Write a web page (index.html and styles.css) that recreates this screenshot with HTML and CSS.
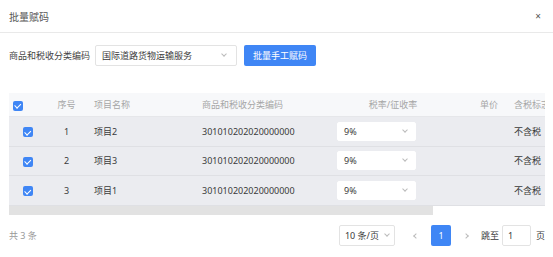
FILE: index.html
```html
<!DOCTYPE html>
<html lang="zh-CN">
<head>
    <meta charset="utf-8">
    <link rel="stylesheet" href="styles.css">
    <title>批量赋码</title>
</head>
<body>
    <div class="dialog">
        <!--TITLE BAR-->
        <div class="dialog-header">
            <span class="dialog-title">批量赋码</span>
            <span class="close">&times;</span>
        </div>

        <!--CODE PICKER-->
        <div class="toolbar">
            <span class="label">商品和税收分类编码</span>
            <div class="select code-select">
                <span>国际道路货物运输服务</span>
                <span class="arrow"></span>
            </div>
            <button class="primary-button">批量手工赋码</button>
        </div>

        <!--TABLE-->
        <div class="table-wrap">
            <table class="table">
                <colgroup>
                    <col style="width:38px">
                    <col style="width:39px">
                    <col style="width:108px">
                    <col style="width:135px">
                    <col style="width:128px">
                    <col style="width:49px">
                    <col style="width:181px">
                </colgroup>
                <thead>
                    <tr>
                        <th class="check-head"><span class="checkbox"></span></th>
                        <th class="center">序号</th>
                        <th>项目名称</th>
                        <th>商品和税收分类编码</th>
                        <th class="center">税率/征收率</th>
                        <th class="right">单价</th>
                        <th>含税标志</th>
                    </tr>
                </thead>
                <tbody>
                    <tr>
                        <td class="center"><span class="checkbox"></span></td>
                        <td class="center">1</td>
                        <td>项目2</td>
                        <td>301010202020000000</td>
                        <td><div class="select rate-select"><span>9%</span><span class="arrow"></span></div></td>
                        <td></td>
                        <td>不含税</td>
                    </tr>
                    <tr>
                        <td class="center"><span class="checkbox"></span></td>
                        <td class="center">2</td>
                        <td>项目3</td>
                        <td>301010202020000000</td>
                        <td><div class="select rate-select"><span>9%</span><span class="arrow"></span></div></td>
                        <td></td>
                        <td>不含税</td>
                    </tr>
                    <tr>
                        <td class="center"><span class="checkbox"></span></td>
                        <td class="center">3</td>
                        <td>项目1</td>
                        <td>301010202020000000</td>
                        <td><div class="select rate-select"><span>9%</span><span class="arrow"></span></div></td>
                        <td></td>
                        <td>不含税</td>
                    </tr>
                </tbody>
            </table>
        </div>
        <!--horizontal scroll bar of the table-->
        <div class="scrollbar"><div class="scroll-thumb"></div></div>

        <!--PAGER-->
        <div class="footer">
            <span class="total">共 3 条</span>
            <div class="pager">
                <div class="select size-select"><span>10 条/页</span><span class="arrow"></span></div>
                <span class="page-arrow prev"></span>
                <span class="page current">1</span>
                <span class="page-arrow next"></span>
                <span class="jump">跳至</span>
                <span class="jump-input">1</span>
                <span class="jump">页</span>
            </div>
        </div>
    </div>
</body>
</html>
```

FILE: styles.css
```css
body{
    margin: 0;
    background: #fff;
    font-family: "Noto Sans", "Noto Sans CJK SC", sans-serif;
    font-size: 9px;
    color: #3a3a3a;
}
.dialog{
    width: 553px;
}
.dialog-header{
    height: 32px;
    display: flex;
    align-items: center;
    justify-content: space-between;
    padding: 0 12px 0 9px;
    border-bottom: 1px solid #e9e9e9;
}
.dialog-title{
    font-size: 10px;
    color: #555;
}
.close{
    font-size: 10px;
    color: #555;
}
.toolbar{
    display: flex;
    align-items: center;
    padding: 12px 9px 0;
    height: 21px;
}
.label{
    margin-right: 5px;
    color: #444;
}
.select{
    box-sizing: border-box;
    display: flex;
    align-items: center;
    justify-content: space-between;
    border: 1px solid #e3e3e3;
    border-radius: 2px;
    background: #fff;
    padding: 0 8px 0 6px;
}
.arrow{
    width: 3px;
    height: 3px;
    border-right: 1px solid #bbb;
    border-bottom: 1px solid #bbb;
    transform: rotate(45deg);
    margin-top: -3px;
}
.code-select{
    width: 142px;
    height: 21px;
    padding-right: 10px;
}
.primary-button{
    margin-left: 7px;
    width: 72px;
    height: 21px;
    border: none;
    border-radius: 2px;
    background: #3f86f5;
    color: #fff;
    font-family: inherit;
    font-size: 9px;
    padding: 0;
}
.table-wrap{
    margin: 27px 8px 0 9px;
    overflow: hidden;
}
.table{
    width: 678px;
    table-layout: fixed;
    border-collapse: collapse;
}
.table th{
    height: 23px;
    background: #f7f8fa;
    color: #a6a6a6;
    font-weight: normal;
    text-align: left;
    padding: 0 8px;
    border-bottom: 1px solid #e6e7ea;
}
.table td{
    height: 28.5px;
    background: #ebecf0;
    padding: 0 8px;
    border-bottom: 1px solid #dfe0e4;
    white-space: nowrap;
}
.table th.check-head{
    padding: 0 4px;
}
.center{
    text-align: center !important;
}
.right{
    text-align: right !important;
}
.checkbox{
    display: inline-block;
    position: relative;
    width: 10px;
    height: 10px;
    border-radius: 2px;
    background: #3f86f5;
    vertical-align: middle;
}
.checkbox::after{
    content: "";
    position: absolute;
    left: 3px;
    top: 1.5px;
    width: 2.5px;
    height: 4.5px;
    border-right: 1px solid #fff;
    border-bottom: 1px solid #fff;
    transform: rotate(45deg);
}
.table td:first-child{
    padding: 0;
}
.rate-select{
    width: 79px;
    height: 19px;
    border-color: #fff;
    padding: 0 8px 0 6px;
}
.scrollbar{
    margin: 0 8px 0 9px;
    height: 9px;
    background: #fff;
}
.scroll-thumb{
    width: 424px;
    height: 9px;
    background: #e2e2e2;
}
.footer{
    display: flex;
    align-items: center;
    justify-content: space-between;
    padding: 10px 8px 0 9px;
    height: 21px;
}
.total{
    color: #999;
}
.pager{
    display: flex;
    align-items: center;
}
.size-select{
    width: 56px;
    height: 21px;
    padding: 0 5px 0 5px;
}
.page-arrow{
    width: 20px;
    height: 21px;
    position: relative;
}
.page-arrow::after{
    content: "";
    position: absolute;
    top: 9px;
    width: 3px;
    height: 3px;
    border-left: 1px solid #bbb;
    border-bottom: 1px solid #bbb;
}
.prev{
    margin-left: 10px;
}
.prev::after{
    left: 9px;
    transform: rotate(45deg);
}
.next::after{
    left: 8px;
    transform: rotate(-135deg);
}
.page{
    width: 20px;
    height: 21px;
    line-height: 21px;
    text-align: center;
    margin: 0 5px 0 6px;
}
.current{
    background: #3f86f5;
    color: #fff;
    border-radius: 2px;
}
.jump{
    margin-left: 5px;
}
.jump-input{
    box-sizing: border-box;
    width: 29px;
    height: 21px;
    line-height: 19px;
    border: 1px solid #e3e3e3;
    border-radius: 2px;
    padding-left: 5px;
    margin-left: 3px;
}
```
